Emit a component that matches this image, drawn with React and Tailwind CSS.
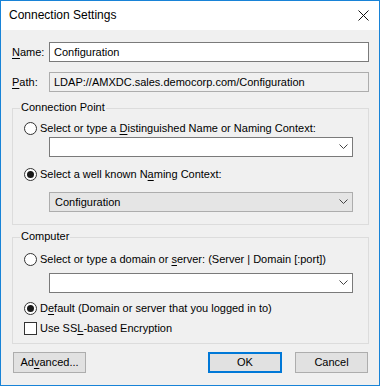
import React from "react";

const U = ({ children }) => (
  <span className="underline underline-offset-[2px] decoration-1">{children}</span>
);

const Radio = ({ checked }) => (
  <span className="w-[13px] h-[13px] rounded-full border border-[#333333] bg-white flex items-center justify-center shrink-0">
    {checked && <span className="w-[7px] h-[7px] rounded-full bg-[#1a1a1a]" />}
  </span>
);

const Chevron = () => (
  <svg width="9" height="6" viewBox="0 0 9 6" className="shrink-0">
    <path d="M0.5 0.5 L4.5 4.5 L8.5 0.5" fill="none" stroke="#444" strokeWidth="1" />
  </svg>
);

const Combo = ({ value, disabled, className = "" }) => (
  <div
    className={
      "ml-[36px] w-[304px] h-[20px] flex items-center justify-between pl-[5px] pr-[4px] border " +
      (disabled ? "bg-[#e5e5e5] border-[#adadad] " : "bg-white border-[#7a7a7a] ") +
      className
    }
  >
    <span>{value}</span>
    <Chevron />
  </div>
);

const RadioRow = ({ checked, children, className = "" }) => (
  <div className={"flex items-center gap-[3px] pl-[11px] h-[15px] " + className}>
    <Radio checked={checked} />
    <span>{children}</span>
  </div>
);

const Group = ({ title, children, className = "" }) => (
  <div className={"relative border border-[#dcdcdc] " + className}>
    <span className="absolute -top-[9px] left-[7px] px-[1px] bg-[#f0f0f0] leading-[15px]">
      {title}
    </span>
    {children}
  </div>
);

const Button = ({ children, primary, className = "" }) => (
  <button
    className={
      "h-[21px] flex items-center justify-center bg-[#e1e1e1] " +
      (primary ? "border-2 border-[#0078d7] " : "border border-[#adadad] ") +
      className
    }
  >
    {children}
  </button>
);

export default function App() {
  return (
    <div
      className="w-[380px] h-[386px] border border-[#1883d7] bg-[#f0f0f0] flex flex-col text-[11px] leading-[15px] text-black"
      style={{ fontFamily: '"Liberation Sans", Arial, sans-serif' }}
    >
      <div className="h-[29px] bg-white flex items-center justify-between pl-[8px] pr-[10px]">
        <span className="text-[12px]">Connection Settings</span>
        <svg width="11" height="11" viewBox="0 0 11 11">
          <path d="M0.5 0.5 L10.5 10.5 M10.5 0.5 L0.5 10.5" stroke="#111" strokeWidth="1" />
        </svg>
      </div>

      <div className="flex flex-col pl-[11px] pr-[10px]">
        <div className="flex items-center mt-[12px]">
          <span className="w-[37px]">
            <U>N</U>ame:
          </span>
          <div className="flex-1 h-[20px] border border-[#7a7a7a] bg-white flex items-center pl-[4px]">
            Configuration
          </div>
        </div>

        <div className="flex items-center mt-[10px]">
          <span className="w-[37px]">
            <U>P</U>ath:
          </span>
          <div className="flex-1 h-[20px] border border-[#adadad] bg-[#f0f0f0] flex items-center pl-[4px]">
            LDAP://AMXDC.sales.democorp.com/Configuration
          </div>
        </div>

        <Group title="Connection Point" className="mt-[16px] pt-[12px] pb-[12px]">
          <RadioRow>
            Select or type a <U>D</U>istinguished Name or Naming Context:
          </RadioRow>
          <Combo value="" className="mt-[1px]" />
          <RadioRow checked className="mt-[10px]">
            Select a well known N<U>a</U>ming Context:
          </RadioRow>
          <Combo value="Configuration" disabled className="mt-[10px]" />
        </Group>

        <Group title="Computer" className="mt-[12px] pt-[14px] pb-[7px]">
          <RadioRow>
            Select or type a domain or <U>s</U>erver: (Server | Domain [:port])
          </RadioRow>
          <Combo value="" className="mt-[6px]" />
          <RadioRow checked className="mt-[8px]">
            D<U>e</U>fault (Domain or server that you logged in to)
          </RadioRow>
          <div className="flex items-center gap-[3px] pl-[11px] h-[15px] mt-[5px]">
            <span className="w-[13px] h-[13px] border border-[#333333] bg-white shrink-0" />
            <span>
              Use SS<U>L</U>-based Encryption
            </span>
          </div>
        </Group>

        <div className="flex items-center mt-[8px] pl-[1px] pr-[1px]">
          <Button className="w-[73px]">
            Ad<U>v</U>anced...
          </Button>
          <div className="flex-1" />
          <Button primary className="w-[74px]">
            OK
          </Button>
          <Button className="w-[73px] ml-[13px]">Cancel</Button>
        </div>
      </div>
    </div>
  );
}
